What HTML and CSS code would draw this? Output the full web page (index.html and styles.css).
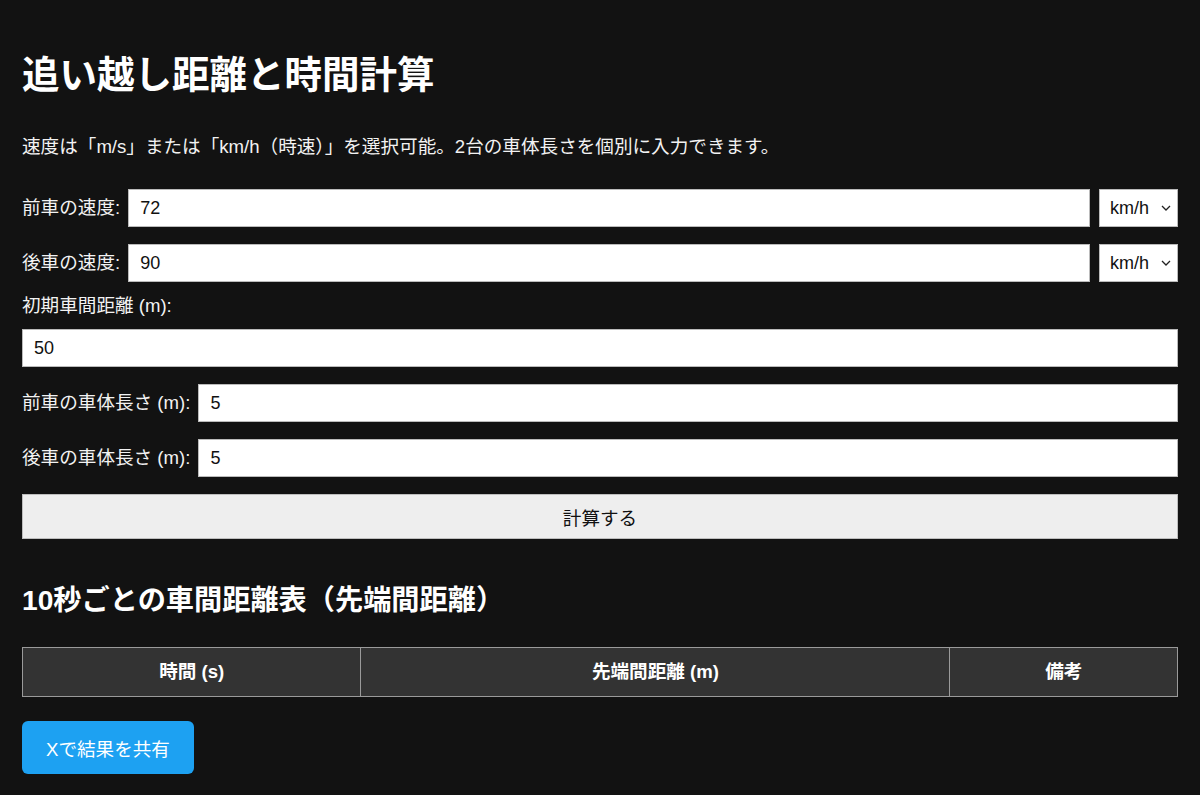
FILE: index.html
```html
<!DOCTYPE html>
<html lang="ja">
<head>
<meta charset="utf-8">
<title>追い越し距離と時間計算</title>
<link rel="stylesheet" href="styles.css">
</head>
<body>
<main class="page">
  <h1 class="title">追い越し距離と時間計算</h1>
  <p class="desc">速度は「m/s」または「km/h（時速）」を選択可能。2台の車体長さを個別に入力できます。</p>

  <div class="row">
    <label class="lbl" for="v1">前車の速度:</label>
    <input class="field" id="v1" type="text" value="72">
    <span class="sel-wrap">
      <select class="sel"><option>km/h</option><option>m/s</option></select>
      <svg class="chev" width="10" height="6" viewBox="0 0 10 6"><path d="M1 1l4 4 4-4" fill="none" stroke="#222" stroke-width="1.3"/></svg>
    </span>
  </div>
  <div class="row">
    <label class="lbl" for="v2">後車の速度:</label>
    <input class="field" id="v2" type="text" value="90">
    <span class="sel-wrap">
      <select class="sel"><option>km/h</option><option>m/s</option></select>
      <svg class="chev" width="10" height="6" viewBox="0 0 10 6"><path d="M1 1l4 4 4-4" fill="none" stroke="#222" stroke-width="1.3"/></svg>
    </span>
  </div>

  <label class="blk-lbl" for="d0">初期車間距離 (m):</label>
  <input class="field full" id="d0" type="text" value="50">

  <div class="row">
    <label class="lbl" for="l1">前車の車体長さ (m):</label>
    <input class="field" id="l1" type="text" value="5">
  </div>
  <div class="row">
    <label class="lbl" for="l2">後車の車体長さ (m):</label>
    <input class="field" id="l2" type="text" value="5">
  </div>

  <button class="calc" type="button">計算する</button>

  <h2 class="sub">10秒ごとの車間距離表（先端間距離）</h2>

  <table class="tbl">
    <thead>
      <tr>
        <th class="c1">時間 (s)</th>
        <th class="c2">先端間距離 (m)</th>
        <th class="c3">備考</th>
      </tr>
    </thead>
  </table>

  <button class="share" type="button">Xで結果を共有</button>
</main>
</body>
</html>
```

FILE: styles.css
```css
* { box-sizing: border-box; }
html, body { margin: 0; padding: 0; }
body {
  background: #121212;
  color: #f2f2f2;
  font-family: "Liberation Sans", Arial, "Noto Sans CJK JP", sans-serif;
  font-size: 18.6px;
}
.page {
  padding: 0 22px 20px;
}
.title {
  margin: 53px 0 0;
  font-size: 37.5px;
  line-height: 44px;
  font-weight: 700;
  color: #fff;
}
.desc {
  margin: 38px 0 0;
  line-height: 24px;
}
.row {
  display: flex;
  align-items: center;
  gap: 8px;
  margin-top: 17px;
}
.desc + .row { margin-top: 30px; }
.lbl {
  white-space: nowrap;
  line-height: 24px;
}
.field {
  flex: 1;
  height: 38px;
  border: 1px solid #bbb;
  background: #fff;
  color: #111;
  font: inherit;
  font-size: 18px;
  padding: 0 11px;
  outline: none;
  min-width: 0;
}
.full {
  display: block;
  width: 100%;
}
.blk-lbl {
  display: block;
  margin: 12px 0 11px;
  line-height: 24px;
}
.full + .row { margin-top: 17px; }
.sel-wrap {
  position: relative;
  flex: 0 0 79px;
  width: 79px;
  height: 38px;
  margin-left: 1px;
}
.sel {
  appearance: none;
  -webkit-appearance: none;
  width: 100%;
  height: 100%;
  border: 1px solid #bbb;
  background: #fff;
  color: #111;
  font: inherit;
  font-size: 18px;
  padding: 0 0 0 10px;
  border-radius: 0;
}
.chev {
  position: absolute;
  right: 7px;
  top: 16px;
  pointer-events: none;
}
.calc {
  display: block;
  width: 100%;
  height: 45px;
  margin-top: 17px;
  background: #eeeeee;
  border: 1px solid #bdbdbd;
  color: #111;
  font: inherit;
  font-size: 18.6px;
}
.sub {
  margin: 44px 0 0;
  font-size: 28.2px;
  line-height: 34px;
  font-weight: 700;
  color: #fff;
}
.tbl {
  width: 100%;
  margin-top: 30px;
  border-collapse: collapse;
}
.tbl th {
  background: #333;
  color: #fff;
  border: 1px solid #9a9a9a;
  font-weight: 700;
  font-size: 18.6px;
  line-height: 24px;
  padding: 12px 8px;
  text-align: center;
}
.c1 { width: 29.3%; }
.c2 { width: 51%; }
.c3 { width: 19.7%; }
.share {
  display: block;
  margin-top: 24px;
  height: 53px;
  padding: 0 24px;
  background: #1da1f2;
  color: #fff;
  border: none;
  border-radius: 6px;
  font: inherit;
  font-size: 18.6px;
}
```
